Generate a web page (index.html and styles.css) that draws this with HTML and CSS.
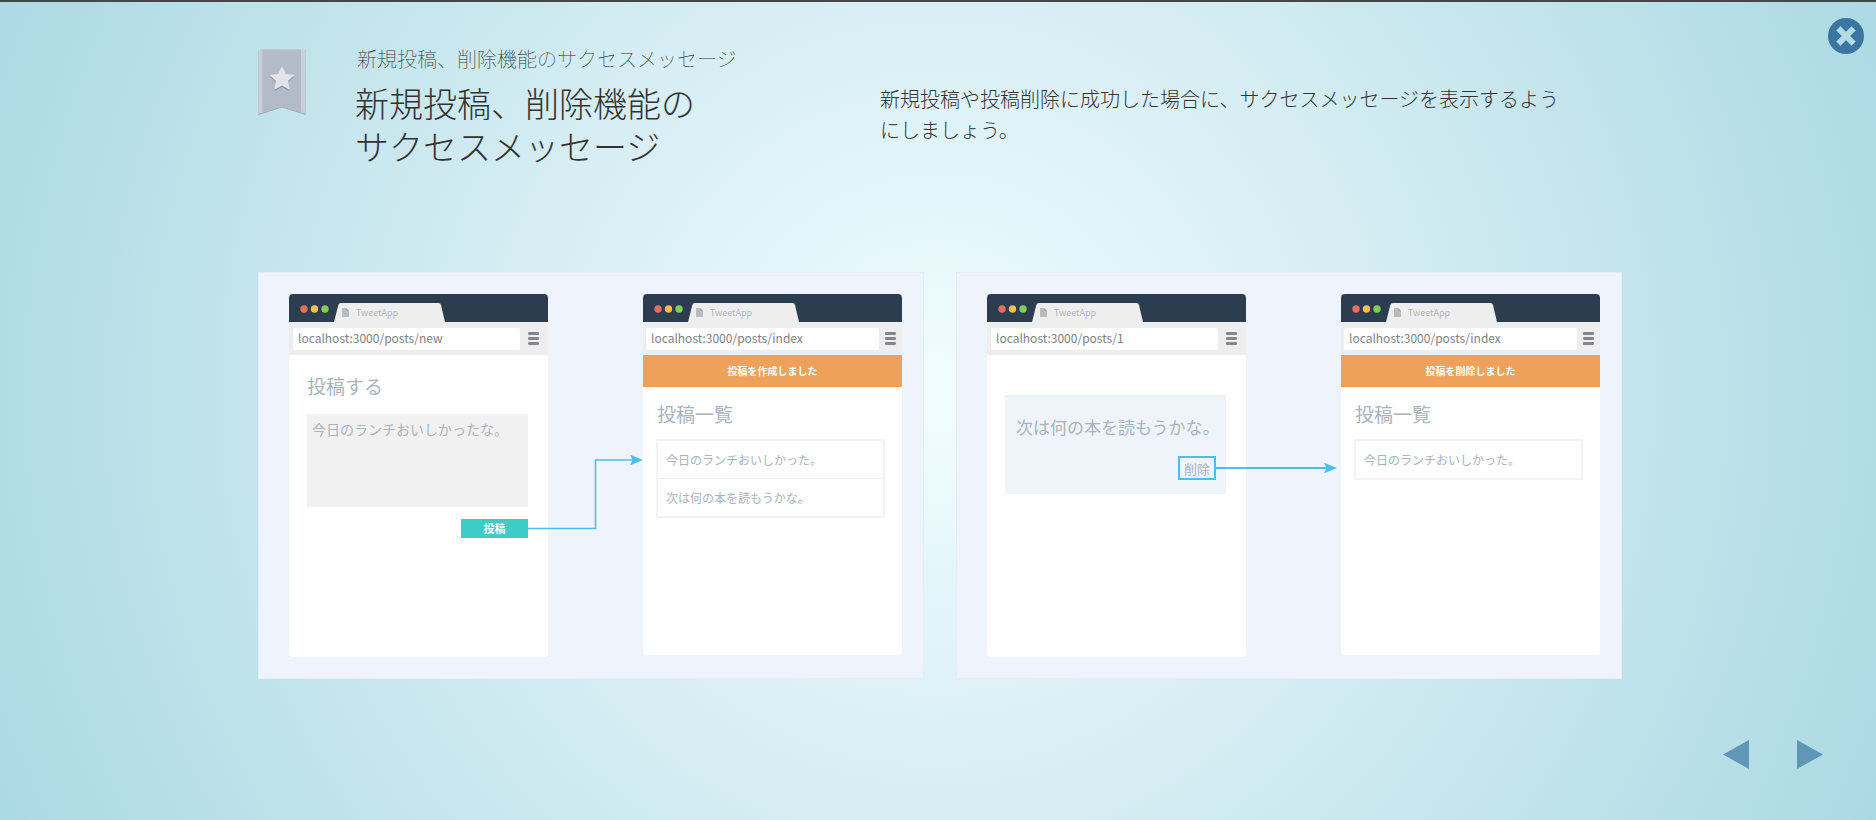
FILE: index.html
```html
<!DOCTYPE html>
<html lang="ja">
<head>
<meta charset="utf-8">
<meta name="viewport" content="width=device-width, initial-scale=1">
<title>新規投稿、削除機能のサクセスメッセージ</title>
<link rel="stylesheet" href="styles.css">
</head>
<body>
<svg class="symbols" aria-hidden="true">
  <symbol id="file" viewBox="0 0 7 9"><path d="M0 0h4.2v2.8H7V9H0z" fill="#b9bbbd"/><path d="M4.2 0L7 2.8H4.2z" fill="#8f9194"/></symbol>
  <symbol id="bars" viewBox="0 0 11 13"><g fill="#85868b"><rect width="11" height="3" rx="1.2"/><rect y="5" width="11" height="3" rx="1.2"/><rect y="10" width="11" height="3" rx="1.2"/></g></symbol>
  <symbol id="tab" viewBox="0 0 111 19" preserveAspectRatio="none"><path d="M0 19L4.300 2Q4.800 0 7 0H104.500Q106.500 0 107 2L111 19z" fill="#eee"/></symbol>
  <symbol id="dots" viewBox="0 0 29 8"><circle cx="4" cy="4" r="3.700" fill="#e86b5b"/><circle cx="14.500" cy="4" r="3.700" fill="#fdbc4f"/><circle cx="25" cy="4" r="3.700" fill="#7ecf56"/></symbol>
</svg>
<main class="slide">
  <header class="intro">
    <svg class="ribbon" viewBox="0 0 48 67" aria-hidden="true">
      <path d="M.5 1.500H47.500V66L24 58.500.5 66z" fill="#9aa7b2"/>
      <path d="M.5.500H47.500V65L24 57.500.5 65z" fill="#c9ced8"/>
      <path d="M4.500.500H43V63.600L24 57.500 4.500 63.600z" fill="#b4bbc8"/>
      <path d="M24 18.500l3.800 7.900 8.600 1.200-6.300 6 1.600 8.600-7.700-4.100-7.700 4.100 1.600-8.600-6.300-6 8.600-1.200z" fill="#8e98a8"/>
      <path d="M24 17l3.800 7.900 8.600 1.200-6.300 6 1.600 8.600-7.700-4.100-7.700 4.100 1.600-8.600-6.300-6 8.600-1.200z" fill="#e1e4ec"/>
    </svg>
    <div class="titles">
      <p class="subtitle">新規投稿、削除機能のサクセスメッセージ</p>
      <h1 class="title">新規投稿、削除機能の<br>サクセスメッセージ</h1>
    </div>
    <p class="lead">新規投稿や投稿削除に成功した場合に、サクセスメッセージを表示するようにしましょう。</p>
  </header>

  <div class="panels">
    <section class="panel">
      <article class="browser">
        <div class="titlebar"><svg class="dots"><use href="#dots"/></svg><div class="tab"><svg class="tab-shape"><use href="#tab"/></svg><svg class="file"><use href="#file"/></svg><span class="tab-name">TweetApp</span></div></div>
        <div class="toolbar"><span class="url">localhost:3000/posts/new</span><svg class="bars"><use href="#bars"/></svg></div>
        <form class="compose">
          <label class="screen-title" for="post">投稿する</label>
          <textarea class="post-input" id="post">今日のランチおいしかったな。</textarea>
          <button class="submit" type="button">投稿</button>
        </form>
      </article>
      <div class="link-area">
        <svg class="connector connector-step" viewBox="0 0 115 80" preserveAspectRatio="none" aria-hidden="true"><path d="M0 74.500H67.500V6H108" fill="none" stroke="#49bfeb" stroke-width="1.600"/><path d="M102 .7L115 6 102 11.300 104.500 6z" fill="#49bfeb"/></svg>
      </div>
      <article class="browser browser-result">
        <div class="titlebar"><svg class="dots"><use href="#dots"/></svg><div class="tab"><svg class="tab-shape"><use href="#tab"/></svg><svg class="file"><use href="#file"/></svg><span class="tab-name">TweetApp</span></div></div>
        <div class="toolbar"><span class="url">localhost:3000/posts/index</span><svg class="bars"><use href="#bars"/></svg></div>
        <p class="flash">投稿を作成しました</p>
        <div class="index">
          <h2 class="screen-title">投稿一覧</h2>
          <ul class="posts"><li class="post">今日のランチおいしかった。</li><li class="post">次は何の本を読もうかな。</li></ul>
        </div>
      </article>
    </section>

    <section class="panel">
      <article class="browser">
        <div class="titlebar"><svg class="dots"><use href="#dots"/></svg><div class="tab"><svg class="tab-shape"><use href="#tab"/></svg><svg class="file"><use href="#file"/></svg><span class="tab-name">TweetApp</span></div></div>
        <div class="toolbar"><span class="url">localhost:3000/posts/1</span><svg class="bars"><use href="#bars"/></svg></div>
        <div class="card">
          <p class="card-text">次は何の本を読もうかな。</p>
          <button class="delete" type="button">削除</button>
        </div>
      </article>
      <div class="link-area">
        <svg class="connector connector-line" viewBox="0 0 121 12" preserveAspectRatio="none" aria-hidden="true"><path d="M0 6H114" stroke="#49bfeb" stroke-width="1.800"/><path d="M108 .7L121 6 108 11.300 110.500 6z" fill="#49bfeb"/></svg>
      </div>
      <article class="browser browser-result">
        <div class="titlebar"><svg class="dots"><use href="#dots"/></svg><div class="tab"><svg class="tab-shape"><use href="#tab"/></svg><svg class="file"><use href="#file"/></svg><span class="tab-name">TweetApp</span></div></div>
        <div class="toolbar"><span class="url">localhost:3000/posts/index</span><svg class="bars"><use href="#bars"/></svg></div>
        <p class="flash">投稿を削除しました</p>
        <div class="index">
          <h2 class="screen-title">投稿一覧</h2>
          <ul class="posts"><li class="post">今日のランチおいしかった。</li></ul>
        </div>
      </article>
    </section>
  </div>
</main>

<nav class="pager" aria-label="スライド">
  <button class="arrow" type="button" aria-label="前へ"><svg viewBox="0 0 26 29"><path d="M26 0V29L0 14.500z"/></svg></button>
  <button class="arrow" type="button" aria-label="次へ"><svg viewBox="0 0 26 29"><path d="M0 0V29L26 14.500z"/></svg></button>
</nav>
<button class="close" type="button" aria-label="閉じる"><svg viewBox="0 0 36 36"><circle cx="18" cy="18" r="18" fill="#3b76a2"/><path d="M12.500 12.500l11 11m0-11l-11 11" stroke="#b2dce6" stroke-width="6" stroke-linecap="square" stroke-linejoin="round"/></svg></button>
</body>
</html>
```
FILE: styles.css
```css
* {
  box-sizing: border-box;
}

body {
  margin: 0;
  min-height: 100vh;
  display: flex;
  flex-direction: column;
  border-top: 2px solid #454648;
  background: radial-gradient(circle farthest-corner at 50% 48%, #f1feff 0, #e3f5fa 20%, #d7eef4 40%, #c4e5ec 66%, #b1dce6 91%, #abd9e3 100%) border-box;
  font-family: "Noto Sans CJK JP", "Noto Sans", sans-serif;
  color: #333;
}

h1, h2, p, ul {
  margin: 0;
  padding: 0;
  font-weight: inherit;
}

button {
  border: 0;
  padding: 0;
  font-family: inherit;
  cursor: pointer;
}

svg {
  display: block;
}

.symbols {
  position: absolute;
  width: 0;
  height: 0;
}

.slide {
  width: 100%;
  max-width: 1368px;
  margin: 0 auto;
  padding: 47px 0 0 4px;
}

/* Heading */
.intro {
  display: flex;
  min-height: 223px;
}

.ribbon {
  flex: none;
  width: 48px;
  height: 67px;
}

.titles {
  flex: none;
  width: 525px;
  margin-left: 49px;
}

.subtitle {
  padding-left: 2px;
  font-size: 20px;
  font-weight: 100;
  line-height: 20px;
}

.title {
  margin-top: 12px;
  font-size: 34px;
  font-weight: 300;
  line-height: 43px;
}

.lead {
  flex: 1;
  max-width: 690px;
  padding-top: 34px;
  font-size: 20px;
  font-weight: 300;
  line-height: 31px;
}

/* Illustrations */
.panels {
  display: grid;
  grid-template-columns: 1fr 1fr;
  gap: 32px;
}

.panel {
  display: grid;
  grid-template-columns: 1fr 95px 1fr;
  padding: 21px 21px 21px 30px;
  border: 1px solid #e5eef7;
  background: #eff4fc;
}

.link-area {
  position: relative;
}

.connector {
  position: absolute;
}

.connector-step {
  left: -20px;
  top: 160px;
  width: 115px;
  height: 80px;
}

.connector-line {
  left: -30px;
  top: 168px;
  width: 121px;
  height: 12px;
}

.browser {
  min-height: 363px;
  border-radius: 4px;
  overflow: hidden;
  background: #fff;
}

.browser-result {
  min-height: 361px;
  margin-bottom: 2px;
}

.titlebar {
  display: flex;
  align-items: flex-end;
  height: 28px;
  padding-left: 11px;
  background: #2b3d4f;
}

.dots {
  width: 29px;
  height: 8px;
  margin-bottom: 9px;
}

.tab {
  display: flex;
  position: relative;
  align-items: center;
  width: 111px;
  height: 19px;
  margin-left: 5px;
  padding-left: 8px;
}

.tab-shape {
  position: absolute;
  left: 0;
  top: 0;
  width: 111px;
  height: 19px;
}

.file {
  position: relative;
  width: 7px;
  height: 9px;
}

.tab-name {
  position: relative;
  margin-left: 7px;
  font-size: 9px;
  line-height: 19px;
  color: #b4b6b8;
}

.toolbar {
  display: flex;
  align-items: center;
  gap: 8px;
  height: 33px;
  padding: 0 9px 0 4px;
  background: #eee;
}

.browser-result .toolbar {
  gap: 6px;
  padding: 0 6px 0 3px;
}

.url {
  flex: 1;
  height: 22px;
  padding-left: 5px;
  border-radius: 2px;
  background: #fff;
  font-size: 12px;
  line-height: 20px;
  color: #808285;
}

.bars {
  width: 11px;
  height: 13px;
}

.flash {
  height: 32px;
  background: #eda15a;
  font-size: 10px;
  font-weight: 700;
  line-height: 32px;
  text-align: center;
  color: #fff;
}

.screen-title {
  font-size: 19px;
  line-height: 24px;
  color: #a9b3be;
}

.compose {
  display: flex;
  flex-direction: column;
  padding: 19px 20px 0 18px;
}

.post-input {
  height: 93px;
  margin-top: 16px;
  padding: 5px;
  border: 0;
  outline: 0;
  resize: none;
  background: #f1f1f1;
  font-family: inherit;
  font-size: 14px;
  line-height: 21px;
  color: #a9b3be;
}

.submit {
  align-self: flex-end;
  width: 67px;
  height: 19px;
  margin-top: 12px;
  background: #3dcdc6;
  font-size: 11px;
  font-weight: 700;
  line-height: 19px;
  color: #fff;
}

.index {
  padding: 15px 17px 0 13px;
}

.index .screen-title {
  padding-left: 1px;
}

.posts {
  margin-top: 13px;
  border: 2px solid #f3f3f3;
  list-style: none;
}

.post {
  height: 37px;
  padding-left: 8px;
  font-size: 12px;
  line-height: 37px;
  color: #a9b3be;
}

.post + .post {
  height: 38px;
  border-top: 1px solid #efefef;
}

.card {
  display: flex;
  flex-direction: column;
  height: 99px;
  margin: 40px 20px 0 18px;
  padding: 20px 10px 0 11px;
  background: #eff4fb;
}

.card-text {
  font-size: 17px;
  line-height: 24px;
  white-space: nowrap;
  color: #a9b3be;
}

.delete {
  align-self: flex-end;
  width: 38px;
  height: 24px;
  margin-top: 17px;
  border: 2px solid #49bfeb;
  background: #eff4fc;
  font-size: 13px;
  line-height: 19px;
  color: #a9b3be;
}

/* Controls */
.pager {
  display: flex;
  justify-content: flex-end;
  gap: 48px;
  margin-top: auto;
  padding: 0 53px 51px;
}

.arrow {
  width: 26px;
  height: 29px;
  background: none;
  fill: #6096b6;
}

.close {
  position: absolute;
  top: 18px;
  right: 12px;
  width: 36px;
  height: 36px;
  border-radius: 50%;
  background: none;
}
```
